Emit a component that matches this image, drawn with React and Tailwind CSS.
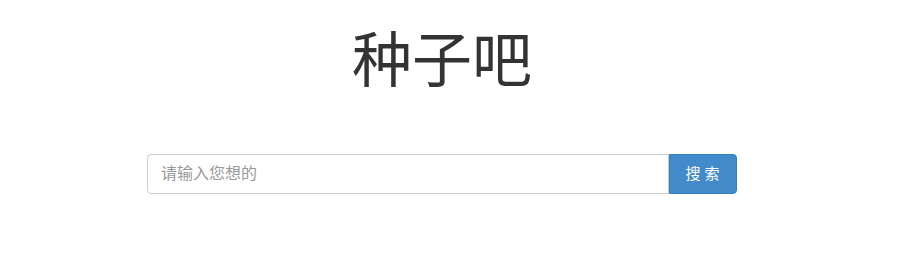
export default function App() {
  return (
    <div
      className="w-[884px] bg-white text-[#333]"
      style={{ fontFamily: '"Liberation Sans", "Noto Sans CJK SC", sans-serif' }}
    >
      {/* Title */}
      <h1 className="pt-[22px] text-center text-[60px] leading-[80px] font-normal">种子吧</h1>

      {/* Search */}
      <div className="mt-[52px] flex justify-center">
        <div className="flex w-[590px]">
          <input
            type="text"
            placeholder="请输入您想的"
            className="h-[40px] flex-1 rounded-l-[4px] border border-[#ccc] pl-[13px] pr-3 text-[16px] text-[#555] placeholder-[#999] outline-none"
          />
          <button className="h-[40px] w-[68px] rounded-r-[4px] border border-[#357ebd] bg-[#428bca] pl-[3px] text-[15px] tracking-[4px] text-white">
            搜索
          </button>
        </div>
      </div>
    </div>
  )
}
